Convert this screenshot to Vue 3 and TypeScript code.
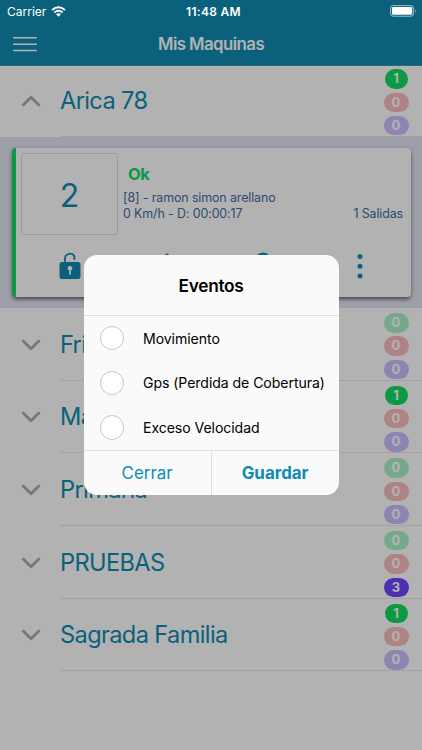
<script setup lang="ts">
interface Group {
  name: string
  open?: boolean
  counts: [number, number, number]
}

const groups: Group[] = [
  { name: 'Arica 78', open: true, counts: [1, 0, 0] },
  { name: 'Fri', counts: [0, 0, 0] },
  { name: 'Ma', counts: [1, 0, 0] },
  { name: 'Primaria', counts: [0, 0, 0] },
  { name: 'PRUEBAS', counts: [0, 0, 3] },
  { name: 'Sagrada Familia', counts: [1, 0, 0] },
]
const tones = ['green', 'red', 'violet']
const events: string[] = ['Movimiento', 'Gps (Perdida de Cobertura)', 'Exceso Velocidad']
</script>

<template>
  <div class="screen">
    <header class="header">
      <div class="toolbar">
        <svg class="menu" viewBox="0 0 24 16" width="24" height="16">
          <path d="M0.7 1.7H23.3M0.7 8.2H23.3M0.7 14.5H23.3" stroke="#fff" stroke-width="1.5" stroke-linecap="round" />
        </svg>
        <h1>Mis Maquinas</h1>
      </div>
    </header>

    <main class="list">
      <section v-for="g in groups" :key="g.name">
        <div class="row">
          <svg class="chevron" :class="{ up: g.open }" viewBox="0 0 20 12" width="20" height="12">
            <path d="M2.2 2L10 9.8L17.8 2" fill="none" stroke="#a9aab3" stroke-width="2.7" stroke-linecap="round" stroke-linejoin="round" />
          </svg>
          <div class="row-body">
            <span class="name">{{ g.name }}</span>
            <div class="badges">
              <span v-for="(c, i) in g.counts" :key="i" class="badge" :class="[tones[i], { dim: c === 0, one: c === 1 }]">{{ c }}</span>
            </div>
          </div>
        </div>

        <div v-if="g.open" class="panel">
          <article class="card">
            <div class="info">
              <div class="number">2</div>
              <div class="details">
                <strong>Ok</strong>
                <p>[8] - ramon simon arellano</p>
                <p class="split"><span>0 Km/h - D: 00:00:17</span><span>1 Salidas</span></p>
              </div>
            </div>
            <div class="actions">
              <svg viewBox="0 0 22 28" width="22" height="28">
                <path d="M6 11V6.5A5 5 0 0 1 15.4 4.3V7" fill="none" stroke="#108cb2" stroke-width="1.8" stroke-linecap="round" />
                <rect x="0.5" y="10" width="21" height="17" rx="2.5" fill="#108cb2" />
                <circle cx="11" cy="16.2" r="2.3" fill="#fff" />
                <path d="M11 17V22" stroke="#fff" stroke-width="1.7" stroke-linecap="round" />
              </svg>
              <svg viewBox="0 0 22 28" width="22" height="28">
                <path d="M9.4 2.3Q11 .8 12.6 2.3L21 26L11 21L1 26Z" fill="#108cb2" />
              </svg>
              <svg viewBox="0 0 22 28" width="22" height="28">
                <path d="M11 .5a9 9 0 0 1 9 9c0 7-9 17-9 17S2 16.5 2 9.5a9 9 0 0 1 9-9Z" fill="#108cb2" />
              </svg>
              <svg viewBox="0 0 22 28" width="22" height="28" fill="#108cb2">
                <circle cx="11" cy="4.4" r="2.5" />
                <circle cx="11" cy="14.2" r="2.5" />
                <circle cx="11" cy="24" r="2.5" />
              </svg>
            </div>
          </article>
        </div>
      </section>
    </main>

    <div class="backdrop">
      <div class="dialog" role="dialog">
        <h2>Eventos</h2>
        <div class="options">
          <label v-for="e in events" :key="e"><i class="radio"></i><span>{{ e }}</span></label>
        </div>
        <div class="buttons">
          <button type="button">Cerrar</button>
          <button type="button" class="primary">Guardar</button>
        </div>
      </div>
    </div>

    <div class="status">
      <div class="carrier">
        <span>Carrier</span>
        <svg viewBox="0 0 16 12" width="15" height="11">
          <g fill="none" stroke="#fff" stroke-width="2.1">
            <path d="M1 4.4Q8-1.6 15 4.4" />
            <path d="M3.5 7.2Q8 3.4 12.5 7.2" />
          </g>
          <path d="M5.4 8.9Q8 6.9 10.6 8.9L8 11.6Z" fill="#fff" />
        </svg>
      </div>
      <span class="clock">11:48 AM</span>
      <svg class="battery" viewBox="0 0 27 12" width="27" height="12">
        <rect x=".6" y=".6" width="23" height="10.6" rx="2.6" fill="none" stroke="#fff" stroke-opacity=".6" />
        <rect x="2" y="2" width="20.2" height="7.8" rx="1.4" fill="#fff" />
        <path d="M25 4Q26.6 5.9 25 7.8Z" fill="#fff" fill-opacity=".6" />
      </svg>
    </div>
  </div>
</template>

<style>
body {
  margin: 0;
  overflow: hidden;
}
</style>

<style scoped>
* {
  box-sizing: border-box;
}
.screen {
  position: relative;
  width: 422px;
  height: 750px;
  overflow: hidden;
  background: #fff;
  font-family: Inter, 'Liberation Sans', sans-serif;
}
.header {
  position: relative;
  z-index: 1;
  height: 65.5px;
  padding-top: 21px;
  background: #108cb2;
  border-bottom: 1px solid #3a9cbb;
}
.toolbar {
  display: grid;
  grid-template-columns: 50px 1fr 50px;
  align-items: center;
  height: 45px;
}
.menu {
  margin-left: 13px;
}
h1 {
  margin: 0;
  text-align: center;
  color: #fff;
  font-size: 16.8px;
  font-weight: 600;
  line-height: 20px;
  letter-spacing: -0.55px;
}
.list {
  margin-top: -1.2px;
}
.row {
  display: flex;
  align-items: center;
  height: 72.67px;
  padding-left: 20.8px;
}
.chevron {
  flex: none;
  margin: 1px 19.2px 0 0;
}
.chevron.up {
  transform: rotate(180deg);
}
.row-body {
  flex: 1;
  height: 100%;
  display: flex;
  align-items: center;
  justify-content: space-between;
  border-bottom: 1px solid #e7e7ea;
  padding-right: 13.5px;
}
.name {
  padding-top: 1.5px;
  color: #108cb2;
  font-size: 23.6px;
  line-height: 30px;
  letter-spacing: -0.62px;
}
.badges {
  display: flex;
  flex-direction: column;
  align-items: center;
  gap: 3.8px;
  padding-top: 4.5px;
}
.badge {
  width: 25px;
  height: 19.5px;
  border-radius: 10px;
  color: #fff;
  font-size: 13px;
  font-weight: 700;
  line-height: 19.5px;
  text-align: center;
}
.badge.one {
  width: 23px;
}
.green {
  background: #10dc60;
}
.red {
  background: #f04141;
}
.violet {
  background: #7044ff;
}
.dim {
  opacity: 0.35;
}
.panel {
  height: 171px;
  padding: 11.5px 11px 0 12px;
  background: #e3e5f2;
}
.card {
  height: 149px;
  border-left: 4px solid #10dc60;
  border-radius: 4px;
  background: #fff;
  box-shadow: 0 3px 4px -1px rgba(0, 0, 0, 0.5), 0 1px 5px rgba(0, 0, 0, 0.2);
}
.info {
  display: flex;
  padding: 5px 8px 0 5px;
}
.number {
  width: 97px;
  height: 81.5px;
  border: 1px solid #dddfec;
  border-radius: 3px;
  color: #108cb2;
  font-size: 32px;
  line-height: 83px;
  text-align: center;
}
.details {
  flex: 1;
  padding: 11px 0 0 5px;
  color: #3f6ca4;
}
.details strong {
  display: block;
  margin: 0 0 6px 5px;
  color: #10dc60;
  font-size: 16.5px;
  line-height: 20px;
  letter-spacing: -0.5px;
}
.details p {
  margin: 0;
  font-size: 12.4px;
  line-height: 15.2px;
  letter-spacing: -0.1px;
}
.split {
  display: flex;
  justify-content: space-between;
}
.actions {
  display: grid;
  grid-template-columns: repeat(4, 96.8px);
  justify-items: center;
  padding: 17px 0 0 5.4px;
}
.backdrop {
  position: absolute;
  inset: 0;
  z-index: 2;
  display: flex;
  align-items: center;
  justify-content: center;
  background: rgba(0, 0, 0, 0.3);
}
.dialog {
  width: 255px;
  height: 239.5px;
  overflow: hidden;
  border-radius: 13px;
  background: #fafafa;
}
h2 {
  height: 60.5px;
  margin: 0;
  border-bottom: 1px solid #dfdfe1;
  color: #000;
  font-size: 17.3px;
  font-weight: 600;
  line-height: 62px;
  text-align: center;
  letter-spacing: -0.3px;
}
.options {
  height: 134.5px;
}
.options label {
  display: flex;
  align-items: center;
  height: 44.8px;
  padding-left: 16px;
  color: #000;
  font-size: 14.1px;
  letter-spacing: -0.07px;
}
.radio {
  flex: none;
  width: 24.5px;
  height: 24.5px;
  margin-right: 19px;
  border: 1px solid #c8c7cc;
  border-radius: 50%;
  background: #fff;
}
.buttons {
  display: grid;
  grid-template-columns: 127.2px 1fr;
  height: 44.5px;
  border-top: 1px solid #dfdfe1;
}
button {
  padding: 0 0 1px;
  border: 0;
  background: none;
  color: #108cb2;
  font: 400 16.9px Inter, 'Liberation Sans', sans-serif;
}
button.primary {
  border-left: 1px solid #dfdfe1;
  font-weight: 700;
}
.status {
  position: absolute;
  inset: 0 0 auto;
  z-index: 3;
  display: grid;
  grid-template-columns: 1fr auto 1fr;
  align-items: center;
  height: 22px;
  padding: 0 5px 0 7px;
  color: #fff;
  font-size: 12px;
}
.carrier {
  display: flex;
  align-items: center;
  gap: 5px;
}
.clock {
  padding-left: 3px;
  font-weight: 600;
  letter-spacing: 0.3px;
}
.battery {
  justify-self: end;
  margin-top: -1px;
}
</style>
